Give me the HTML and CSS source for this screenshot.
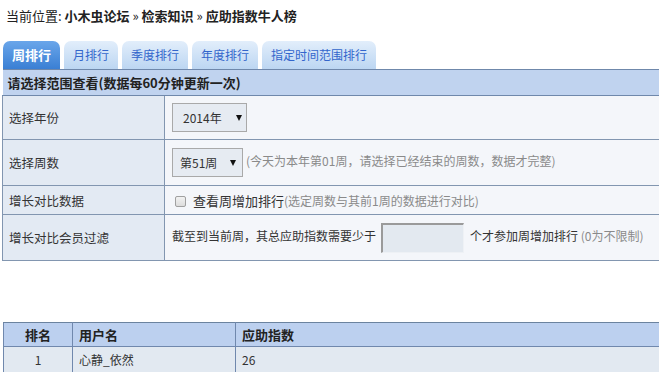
FILE: index.html
```html
<!DOCTYPE html>
<html lang="zh">

<head>
    <meta charset="utf-8">
    <meta name="viewport" content="width=device-width, initial-scale=1.0">
    <title>应助指数牛人榜</title>
    <link rel="stylesheet" href="styles.css">
</head>

<body>
    <div class="sti">当前位置: <b>小木虫论坛</b> » <b>检索知识</b> » <b>应助指数牛人榜</b></div>

    <nav class="tabs">
        <a class="tab valgt">周排行</a>
        <a class="tab">月排行</a>
        <a class="tab">季度排行</a>
        <a class="tab">年度排行</a>
        <a class="tab">指定时间范围排行</a>
    </nav>

    <table class="form">
        <tr>
            <th colspan="2">请选择范围查看(数据每60分钟更新一次)</th>
        </tr>
        <tr class="r1">
            <td class="lab">选择年份</td>
            <td><span class="sel s-year">2014年<i></i></span></td>
        </tr>
        <tr class="r2">
            <td class="lab">选择周数</td>
            <td><span class="sel s-week">第51周<i></i></span><span class="tip">(今天为本年第01周，请选择已经结束的周数，数据才完整)</span></td>
        </tr>
        <tr class="r3">
            <td class="lab">增长对比数据</td>
            <td><span class="chk"></span><span class="big">查看周增加排行</span><span class="tip">(选定周数与其前1周的数据进行对比)</span></td>
        </tr>
        <tr class="r4">
            <td class="lab">增长对比会员过滤</td>
            <td>截至到当前周，其总应助指数需要少于<span class="inp"></span>个才参加周增加排行 <span class="tip">(0为不限制)</span></td>
        </tr>
    </table>

    <table class="list">
        <tr>
            <th class="c1">排名</th>
            <th class="c2">用户名</th>
            <th>应助指数</th>
        </tr>
        <tr>
            <td class="c1">1</td>
            <td>心静_依然</td>
            <td>26</td>
        </tr>
    </table>
</body>

</html>
```

FILE: styles.css
```css
* {
    box-sizing: border-box;
}

html,
body {
    overflow: hidden;
}

body {
    margin: 0;
    padding: 0;
    font-family: "Noto Sans CJK SC", "Liberation Sans", sans-serif;
    font-size: 12px;
    color: #333;
    background: #fff;
}

.sti {
    padding: 7px 0 0 6px;
    height: 41px;
    line-height: 18px;
    font-size: 13px;
    color: #222;
}

.sti b {
    font-weight: bold;
}

.tabs {
    display: flex;
    gap: 4px;
    padding-left: 3px;
    height: 28px;
}

.tab {
    display: block;
    height: 28px;
    line-height: 28px;
    padding: 0 9px;
    border-radius: 7px 7px 0 0;
    background: linear-gradient(#e2eefb, #bcd6f2);
    color: #3366cc;
    font-size: 12px;
}

.tab.valgt {
    background: linear-gradient(#6aa6ea, #3a7fd4);
    color: #fff;
    font-weight: bold;
    font-size: 13px;
    padding: 0 9px;
}

table {
    border-collapse: collapse;
    width: 720px;
}

.form {
    margin-left: 2px;
}

.form th {
    text-align: left;
    background: #c0d3ef;
    height: 26px;
    padding: 0 5px;
    font-weight: bold;
    font-size: 13px;
    color: #222;
    border-top: 1px solid #6f88ab;
    border-bottom: 1px solid #6f88ab;
}

.form td {
    border: 1px solid #8296b0;
    background: #f4f6fa;
    padding: 0 7px;
    white-space: nowrap;
}

.form td.lab {
    width: 162px;
    background: #e3eaf3;
    padding-left: 6px;
    font-size: 12.5px;
}

.r1 td {
    height: 44px;
}

.r2 td {
    height: 46px;
}

.r3 td {
    height: 29px;
}

.r4 td {
    height: 46px;
}

.sel {
    display: inline-flex;
    align-items: center;
    height: 29px;
    padding-left: 10px;
    border: 1px solid #a9a9a9;
    background: #e6ebf2;
    vertical-align: middle;
}

.sel i {
    width: 0;
    height: 0;
    border-left: 3px solid transparent;
    border-right: 3px solid transparent;
    border-top: 6px solid #111;
}

.s-year {
    width: 75px;
}

.s-year i {
    margin-left: 14px;
}

.s-week {
    width: 71px;
    padding-left: 7px;
    margin-right: 3px;
}

.s-week i {
    margin-left: 13px;
}

.tip {
    color: #8a8a8a;
    font-size: 12px;
}

.big {
    font-size: 13px;
}

.chk {
    display: inline-block;
    width: 11px;
    height: 11px;
    border: 1px solid #a0a0a0;
    background: linear-gradient(#f2f2f2, #dcdcdc);
    border-radius: 2px;
    margin: 0 7px 0 3px;
    vertical-align: -1px;
}

.inp {
    display: inline-block;
    width: 83px;
    height: 30px;
    margin: 0 6px 0 5px;
    background: #e3e9f0;
    border-top: 2px solid #9a9a9a;
    border-left: 2px solid #9a9a9a;
    border-right: 1px solid #eef1f5;
    border-bottom: 1px solid #eef1f5;
    vertical-align: middle;
}

.list {
    margin: 61px 0 0 3px;
}

.list th,
.list td {
    border: 1px solid #7088ad;
    height: 24px;
    padding: 0 6px;
    text-align: left;
}

.list th {
    background: #bcd0ef;
    font-weight: bold;
    font-size: 13px;
    color: #222;
    border-top: 1px solid #6b839f;
}

.list td {
    background: #e2e9f1;
    height: 26px;
}

.list .c1 {
    width: 69px;
    text-align: center;
}

.list .c2 {
    width: 163px;
}
```
